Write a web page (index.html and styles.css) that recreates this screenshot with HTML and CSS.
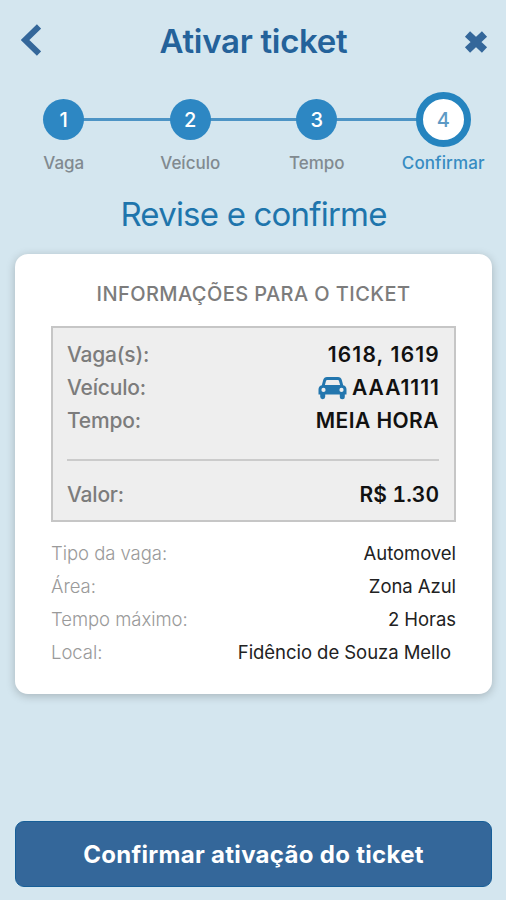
FILE: index.html
```html
<!DOCTYPE html>
<html lang="pt-BR">
<head>
  <meta charset="UTF-8">
  <meta name="viewport" content="width=device-width, initial-scale=1.0">
  <title>Ativar ticket</title>
  <link rel="stylesheet" href="styles.css">
</head>
<body>
  <div class="screen">
    <header class="header">
      <button class="icon-btn" aria-label="Voltar">
        <svg class="icon-back" viewBox="0 0 20 32"><path d="M18 2.5L4 16L18 29.5"/></svg>
      </button>
      <h1 class="title">Ativar ticket</h1>
      <button class="icon-btn" aria-label="Fechar">
        <svg class="icon-close" viewBox="0 0 26 26"><path d="M4.5 5L21.5 21M21.5 5L4.5 21"/></svg>
      </button>
    </header>
    <ol class="steps">
      <li class="step">
        <span class="step-number">1</span>
        <span class="step-label">Vaga</span>
      </li>
      <li class="step">
        <span class="step-number">2</span>
        <span class="step-label">Veículo</span>
      </li>
      <li class="step">
        <span class="step-number">3</span>
        <span class="step-label">Tempo</span>
      </li>
      <li class="step active">
        <span class="step-number">4</span>
        <span class="step-label">Confirmar</span>
      </li>
    </ol>
    <h2 class="subtitle">Revise e confirme</h2>
    <main class="card">
      <h3 class="card-title">INFORMAÇÕES PARA O TICKET</h3>
      <div class="summary">
        <div class="row"><span>Vaga(s):</span><strong class="spots">1618, 1619</strong></div>
        <div class="row">
          <span>Veículo:</span>
          <strong class="plate">
            <svg class="icon-car" viewBox="0 0 29 24">
              <path fill-rule="evenodd" d="M9 1H20Q23 1 23.8 4L25.2 9.2Q28.5 10 28.5 13.5V18.5H26.8V20.7A2.5 2.5 0 0 1 21.8 20.7V18.5H7.2V20.7A2.5 2.5 0 0 1 2.2 20.7V18.5H.5V13.5Q.5 10 3.8 9.2L5.2 4Q6 1 9 1ZM9.2 4Q8.2 4 8 5L6.9 9H22.1L21 5Q20.8 4 19.8 4ZM5.5 11.8A2.1 2.1 0 1 0 5.5 16A2.1 2.1 0 1 0 5.5 11.8ZM23.5 11.8A2.1 2.1 0 1 0 23.5 16A2.1 2.1 0 1 0 23.5 11.8Z"/>
            </svg>
            AAA1111
          </strong>
        </div>
        <div class="row"><span>Tempo:</span><strong class="time">MEIA HORA</strong></div>
        <div class="row total"><span>Valor:</span><strong class="price">R$ 1.30</strong></div>
      </div>
      <div class="details">
        <div class="row"><span>Tipo da vaga:</span><span class="value">Automovel</span></div>
        <div class="row"><span>Área:</span><span class="value">Zona Azul</span></div>
        <div class="row"><span>Tempo máximo:</span><span class="value">2 Horas</span></div>
        <div class="row"><span>Local:</span><span class="value place">Fidêncio de Souza Mello</span></div>
      </div>
    </main>
    <button class="btn-confirm">Confirmar ativação do ticket</button>
  </div>
</body>
</html>
```
FILE: styles.css
```css
* {
  margin: 0;
  padding: 0;
  box-sizing: border-box;
}
body {
  background: #d4e6ef;
  font-family: Inter, "Liberation Sans", sans-serif;
}
button {
  border: none;
  background: none;
  font-family: inherit;
  cursor: pointer;
}
.screen {
  display: flex;
  flex-direction: column;
  height: 900px;
  padding: 0 14px 13px 15px;
}
.header {
  display: flex;
  align-items: center;
  justify-content: space-between;
  height: 82px;
}
.icon-btn {
  display: flex;
  width: 32px;
}
.icon-btn svg {
  fill: none;
  stroke: #34679a;
}
.icon-back {
  width: 20px;
  height: 32px;
  margin: -3px 0 0 6px;
  stroke-width: 6;
}
.icon-close {
  width: 26px;
  height: 26px;
  margin: 1px 0 0 3px;
  stroke-width: 7.5;
}
.title {
  color: #24629a;
  font-size: 33px;
  font-weight: 600;
  letter-spacing: -0.3px;
}
.steps {
  display: grid;
  grid-template-columns: repeat(4, 126.5px);
  margin: 10px -15px 0 -14.5px;
  list-style: none;
}
.step {
  position: relative;
  display: flex;
  flex-direction: column;
  align-items: center;
}
.step + .step::before {
  content: "";
  position: absolute;
  top: 26px;
  left: -63px;
  width: 126px;
  height: 3px;
  background: #4d94c5;
}
.step-number {
  z-index: 1;
  display: flex;
  align-items: center;
  justify-content: center;
  width: 41px;
  height: 41px;
  margin: 7px 0;
  border-radius: 50%;
  background: #2d87c3;
  color: white;
  font-size: 20px;
  font-weight: 500;
}
.step-label {
  margin-top: 6px;
  color: #818a90;
  font-size: 17px;
  font-weight: 500;
  line-height: 20px;
}
.active .step-number {
  width: 55px;
  height: 55px;
  margin: 0;
  border: 7px solid #2584bf;
  background: white;
  color: #5d9ac5;
}
.active .step-label {
  color: #378cc2;
  letter-spacing: 0.1px;
}
.subtitle {
  margin-top: 21px;
  color: #1e75ac;
  font-size: 33px;
  font-weight: 400;
  letter-spacing: -0.8px;
  line-height: 40px;
  text-align: center;
}
.card {
  height: 440px;
  margin-top: 20px;
  padding: 27px 36px 0;
  border-radius: 13px;
  background: white;
  box-shadow: 0 2px 10px rgba(0, 0, 0, 0.22);
}
.card-title {
  color: #7c7c7c;
  font-size: 20px;
  font-weight: 500;
  letter-spacing: 0.42px;
  line-height: 26px;
  text-align: center;
}
.summary {
  height: 196px;
  margin-top: 19px;
  padding: 10px 15px 0 14px;
  border: 2px solid #c6c6c6;
  background: #eee;
}
.row {
  display: flex;
  justify-content: space-between;
  height: 33px;
  line-height: 33px;
}
.summary .row {
  color: #7c7c7c;
  font-size: 21px;
  font-weight: 500;
  letter-spacing: -0.2px;
}
.summary strong {
  color: #111;
  font-weight: 600;
  letter-spacing: 0.45px;
}
.summary .spots {
  margin-right: -1px;
  letter-spacing: 1.2px;
}
.summary .plate {
  display: flex;
  align-items: center;
  gap: 5px;
  margin-right: -1px;
  letter-spacing: 1px;
}
.summary .price {
  letter-spacing: 0;
  font-variant-numeric: tabular-nums;
}
.icon-car {
  width: 29px;
  height: 24px;
  fill: #2376ae;
}
.summary .total {
  height: 52px;
  margin-top: 22px;
  padding-top: 17px;
  border-top: 2px solid #cbcbcb;
}
.details {
  margin-top: 15px;
  color: #9a9a9a;
  font-size: 18.5px;
  font-weight: 300;
  letter-spacing: -0.05px;
}
.value {
  color: #222;
  font-weight: 400;
}
.place {
  margin-right: 5px;
}
.btn-confirm {
  height: 66px;
  margin-top: auto;
  border: 1px solid #175f98;
  border-radius: 9px;
  background: #34679a;
  color: white;
  font-size: 24px;
  font-weight: 700;
  letter-spacing: 0.3px;
}
```
